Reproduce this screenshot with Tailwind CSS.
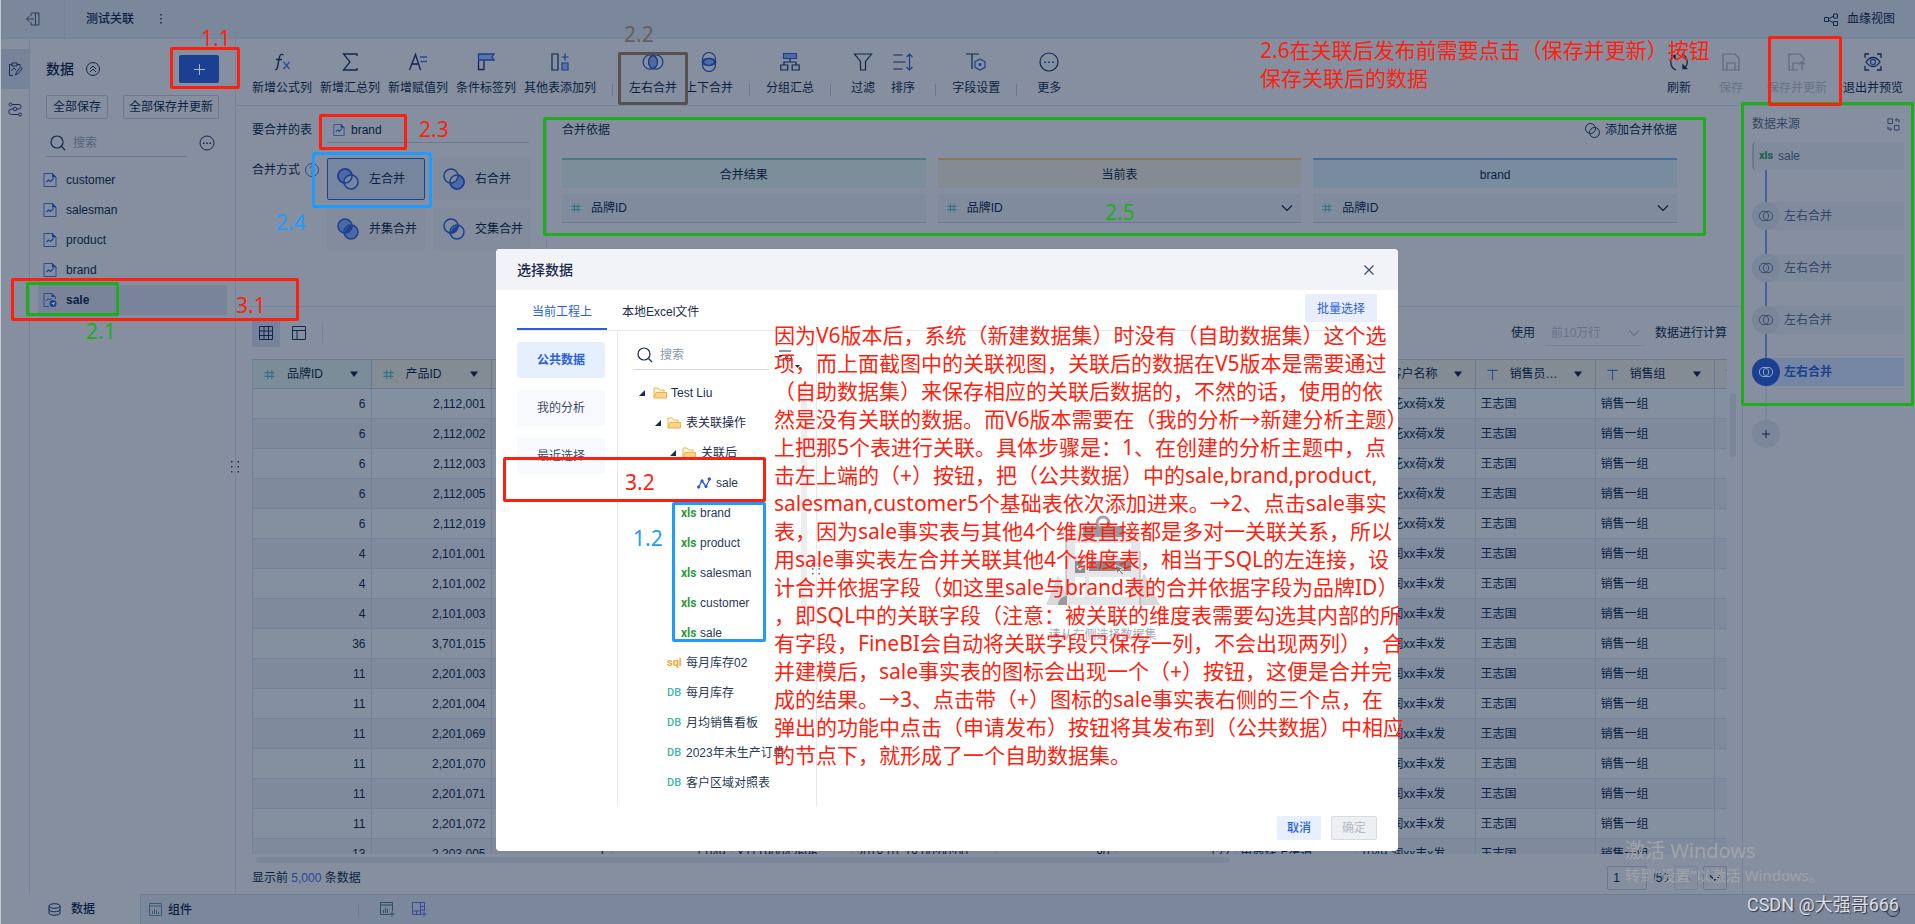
<!DOCTYPE html>
<html lang="zh-CN">
<head>
<meta charset="utf-8">
<title>测试关联</title>
<script src="https://cdn.jsdelivr.net/npm/@tailwindcss/browser@4"></script>
</head>
<body class="relative h-screen overflow-hidden bg-[#858f9f] font-['Liberation_Sans','Noto_Sans_CJK_SC',sans-serif] text-xs text-[#0b1f42]">

<svg class="hidden" aria-hidden="true">
  <symbol id="i-file" viewBox="0 0 14 14"><path d="M1 .5h8.500L13 4v9.500H1z" fill="none" stroke="#2c4a92"/><path d="M9 0l4.500 4.500H9z" fill="#1d3f8f"/><path d="M3.500 9l2-2 2 1.500 3-3" fill="none" stroke="#1d3f8f" stroke-width="1.200"/></symbol>
  <symbol id="i-file-pub" viewBox="0 0 14 14"><path d="M6 13.500H1V.5h8L12.500 4v2" fill="none" stroke="#2c4a92"/><path d="M8.500 0l4 4h-4z" fill="#1d3f8f"/><path d="M3 8l2-2.500L6.500 7l2-2" fill="none" stroke="#1d3f8f"/><circle cx="10" cy="10.500" r="3.500" fill="#1d3f8f"/><path d="M8 10.500l4-1.500-1.500 3.500-.7-1.500z" fill="#a5b3d0"/></symbol>
  <symbol id="i-search" viewBox="0 0 16 16"><circle cx="7" cy="7" r="6" fill="none" stroke="currentColor" stroke-width="1.200"/><path d="M11.500 11.500L15 15" stroke="currentColor" stroke-width="1.200"/></symbol>
  <symbol id="i-more" viewBox="0 0 16 16"><circle cx="8" cy="8" r="7" fill="none" stroke="currentColor"/><path d="M4 7.500h1.500v1.500H4zM7.300 7.500h1.500v1.500H7.300zM10.500 7.500H12v1.500h-1.500z" fill="currentColor"/></symbol>
  <symbol id="i-hash" viewBox="0 0 12 12"><path d="M4 1v10M8.500 1v10M.5 4h11M.5 8h11" stroke="#2d7384" stroke-width="1.200" fill="none"/></symbol>
  <symbol id="i-t" viewBox="0 0 12 12"><path d="M.5 1.500h11M6 1.500V12" stroke="#2c4a9c" stroke-width="1.200" fill="none"/></symbol>
  <symbol id="i-caret" viewBox="0 0 8 6"><path d="M0 .5h8L4 6z" fill="#0b1f42"/></symbol>
  <symbol id="i-chev" viewBox="0 0 12 8"><path d="M1 1.500l5 5 5-5" fill="none" stroke="currentColor" stroke-width="1.200"/></symbol>
  <symbol id="i-venn" viewBox="0 0 20 18"><circle cx="7.500" cy="9" r="6.500" fill="none" stroke="currentColor" stroke-width="1.100"/><circle cx="12.500" cy="9" r="6.500" fill="none" stroke="currentColor" stroke-width="1.100"/><path d="M10 3a6.500 6.500 0 0 1 0 12a6.500 6.500 0 0 1 0-12z" fill="#4d6ba4" stroke="currentColor" stroke-width="1.100"/></symbol>
  <symbol id="i-node" viewBox="0 0 14 12"><circle cx="5" cy="6" r="4.700" fill="none" stroke="currentColor" stroke-width=".9"/><circle cx="9" cy="6" r="4.700" fill="none" stroke="currentColor" stroke-width=".9"/></symbol>
  <symbol id="i-folder" viewBox="0 0 14 12"><path d="M1 11V1h4l1.500 2H11v2" fill="#fff6e2" stroke="#eeb04a"/><path d="M1 11l2-5.500h10.500V11z" fill="#fcd48c" stroke="#eeb04a"/></symbol>
  <symbol id="i-tri" viewBox="0 0 6 6"><path d="M6 0v6H0z" fill="#1c2b4a"/></symbol>
  <symbol id="i-dots" viewBox="0 0 8 12"><path d="M0 0h1.500v1.500H0zM6.500 0H8v1.500H6.500zM0 5h1.500v1.500H0zM6.500 5H8v1.500H6.500zM0 10h1.500v1.500H0zM6.500 10H8v1.500H6.500z" fill="currentColor"/></symbol>
</svg>

<div class="flex h-screen flex-col border-l border-[#c3c9d0]">
  <!-- title bar -->
  <header class="flex h-[39px] shrink-0 items-center border-b border-[#74829a] bg-[#7b879a]">
    <button aria-label="退出" class="flex h-full w-16 items-center justify-center border-r border-[#74829a]">
      <svg class="h-[14px] w-[14px]" viewBox="0 0 14 14" fill="none" stroke="#2b3c5e"><path d="M5 4V1h8v12H5v-3M9.500 1v12M8 7H.5M3.500 4L.5 7l3 3"/></svg>
    </button>
    <h1 class="ml-[21px] text-xs font-medium">测试关联</h1>
    <button aria-label="更多操作" class="ml-[26px]"><svg class="h-3 w-[2px]" viewBox="0 0 2 12" fill="#2b3c5e"><path d="M0 1h2v1.500H0zM0 5h2v1.500H0zM0 9h2v1.500H0z"/></svg></button>
    <button class="mr-5 ml-auto flex items-center gap-[9px]">
      <svg class="h-[13px] w-[14px]" viewBox="0 0 14 13" fill="none" stroke="#15284d"><path d="M.5 4.500h4v4h-4zM9.500 1h4v4h-4zM9.500 8.500h4v4h-4zM4.500 6L9.500 3M4.500 7l5 3"/></svg>
      血缘视图
    </button>
  </header>

  <div class="flex min-h-0 flex-1">
    <!-- icon rail -->
    <nav class="w-[29px] shrink-0 border-r border-[#76839a] pt-[10px]" aria-label="视图">
      <button aria-label="数据" class="flex h-10 w-full items-center justify-center bg-[#76839a]">
        <svg class="h-[15px] w-[15px]" viewBox="0 0 15 15" fill="none" stroke="#1b2e55"><path d="M5 13.500H1.500v-11H4M9 2.500h3v2M4 1h5v3H4zM3.500 9l2.500-3 2 2M7.500 13l1-3 4-5 1.800 1.500-4 5z"/></svg>
      </button>
      <button aria-label="血缘" class="flex h-10 w-full items-center justify-center">
        <svg class="h-[15px] w-[15px]" viewBox="0 0 15 15" fill="none" stroke="#1b2e55"><circle cx="2.500" cy="2.500" r="1.500"/><circle cx="7" cy="7" r="1.800"/><circle cx="12" cy="12.500" r="1.500"/><path d="M4 2.500h7a2 2 0 0 1 2 2.200 2.200 2.200 0 0 1-2 2.300H9M5 7H3.500A2.500 2.500 0 0 0 3.500 12.500h7"/></svg>
      </button>
    </nav>

    <!-- data list -->
    <aside class="flex w-[206px] shrink-0 flex-col border-r border-[#76839a]">
      <div class="mt-4 flex h-7 items-center pr-4 pl-4">
        <h2 class="text-sm font-medium">数据</h2>
        <button aria-label="收起" class="ml-3"><svg class="h-[14px] w-[14px]" viewBox="0 0 14 14" fill="none" stroke="#15284d"><circle cx="7" cy="7" r="6.500"/><path d="M4 7l3-3 3 3M4 10l3-3 3 3"/></svg></button>
        <button aria-label="添加" class="ml-auto flex h-7 w-10 items-center justify-center rounded-xs bg-[#1c4091]"><svg class="h-[11px] w-[11px]" viewBox="0 0 11 11" stroke="#a9b5cd"><path d="M5.500 0v11M0 5.500h11"/></svg></button>
      </div>
      <div class="mt-3 flex justify-between px-4">
        <button class="h-6 rounded-xs border border-[#6c7990] px-[6px] leading-[22px]">全部保存</button>
        <button class="h-6 rounded-xs border border-[#6c7990] px-[5px] leading-[22px]">全部保存并更新</button>
      </div>
      <div class="mt-[10px] flex items-center pl-4">
        <label class="flex h-7 w-[141px] items-center gap-[7px] border-b border-[#6c7990] pl-1 text-[#15284d]">
          <svg class="h-4 w-4 shrink-0"><use href="#i-search"/></svg>
          <input type="text" placeholder="搜索" aria-label="搜索" class="w-full min-w-0 bg-transparent outline-none placeholder:text-[#56647d]">
        </label>
        <button aria-label="更多" class="ml-3"><svg class="h-4 w-4 text-[#15284d]"><use href="#i-more"/></svg></button>
      </div>
      <ul class="mt-2 pr-2 pl-2 text-[#0b1f42]">
        <li class="flex h-[30px] items-center gap-[9px] pl-[5px]"><svg class="h-[14px] w-[14px]"><use href="#i-file"/></svg>customer</li>
        <li class="flex h-[30px] items-center gap-[9px] pl-[5px]"><svg class="h-[14px] w-[14px]"><use href="#i-file"/></svg>salesman</li>
        <li class="flex h-[30px] items-center gap-[9px] pl-[5px]"><svg class="h-[14px] w-[14px]"><use href="#i-file"/></svg>product</li>
        <li class="flex h-[30px] items-center gap-[9px] pl-[5px]"><svg class="h-[14px] w-[14px]"><use href="#i-file"/></svg>brand</li>
        <li class="flex h-[30px] items-center gap-[9px] bg-[#798399] pl-[5px] font-bold"><svg class="h-[14px] w-[14px]"><use href="#i-file-pub"/></svg>sale</li>
      </ul>
    </aside>

    <div class="flex min-w-0 flex-1 flex-col">
      <!-- toolbar -->
      <div class="flex h-[67px] shrink-0 items-start gap-2 border-b border-[#76839a] pt-[13px] pr-3 pl-4 whitespace-nowrap">
        <button class="flex flex-col items-center gap-2"><svg class="h-5 w-5" viewBox="0 0 20 20" fill="none" stroke="#12264c" stroke-width="1.300"><path d="M11.500 3c-2-1.500-3.500-.5-4 2L5.500 15c-.4 2-1 3-2.500 2.500M4 7.500h6"/><path d="M11.500 10l6 7M17.500 10l-6 7" stroke="#2a4b9a"/></svg>新增公式列</button>
        <button class="flex flex-col items-center gap-2"><svg class="h-5 w-5" viewBox="0 0 20 20" fill="none" stroke="#12264c" stroke-width="1.300"><path d="M17 4V2H3.500l6.500 8-6.500 8H17v-2"/></svg>新增汇总列</button>
        <button class="flex flex-col items-center gap-2"><svg class="h-5 w-5" viewBox="0 0 20 20" fill="none" stroke="#12264c" stroke-width="1.300"><path d="M1.500 18l6-15.500 5 15.500M4 12h7"/><path d="M12 5h7M12.500 9.500H19" stroke="#2a4b9a"/></svg>新增赋值列</button>
        <button class="flex flex-col items-center gap-2"><svg class="h-5 w-5" viewBox="0 0 20 20" fill="none" stroke="#12264c" stroke-width="1.300"><path d="M2.500 8.500v9H8v-9"/><path d="M2.500 2H18l-2 3 2 3H2.500z" fill="#5874ab" stroke="#1d3f8f"/></svg>条件标签列</button>
        <button class="flex flex-col items-center gap-2"><svg class="h-5 w-5" viewBox="0 0 20 20" fill="none" stroke="#12264c" stroke-width="1.200"><path d="M2 2h6v16H2z"/><path d="M12 11h6v7h-6z" fill="#5874ab" stroke="#1d3f8f"/><path d="M15 1.500v7M11.500 5h7" stroke="#1d3f8f"/></svg>其他表添加列</button>
        <span class="mx-2 mt-8 h-3 w-px bg-[#6c7990]"></span>
        <button class="flex flex-col items-center gap-2"><svg class="h-5 w-[22px] text-[#1a3a80]"><use href="#i-venn"/></svg>左右合并</button>
        <button class="flex flex-col items-center gap-2"><svg class="h-5 w-5" viewBox="0 0 20 20" fill="none" stroke="#1a3a80" stroke-width="1.200"><path d="M3 10a7.500 5.500 0 0 1 14 0a7.500 5.500 0 0 1-14 0z" fill="#4d6ba4"/><circle cx="10" cy="7" r="6.500"/><circle cx="10" cy="13" r="6.500"/></svg>上下合并</button>
        <span class="mx-2 mt-8 h-3 w-px bg-[#6c7990]"></span>
        <button class="flex flex-col items-center gap-2"><svg class="h-5 w-5" viewBox="0 0 20 20" fill="none" stroke="#12264c" stroke-width="1.200"><path d="M10 7v3M4 13v-3h12v3M.8 13h7v5h-7zM12.200 13h7v5h-7z"/><path d="M3.500 1.500h13v5h-13z" fill="#4d6ba4" stroke="#1d3f8f"/></svg>分组汇总</button>
        <span class="mx-2 mt-8 h-3 w-px bg-[#6c7990]"></span>
        <button class="flex w-8 flex-col items-center gap-2"><svg class="h-5 w-5" viewBox="0 0 20 20" fill="none" stroke="#12264c" stroke-width="1.200"><path d="M1.500 2h17l-6 7.500V18h-5V9.500z"/></svg>过滤</button>
        <button class="flex w-8 flex-col items-center gap-2"><svg class="h-5 w-5" viewBox="0 0 20 20" fill="none" stroke="#12264c" stroke-width="1.200"><path d="M.5 3h9M.5 10h12M.5 17h9"/><path d="M16.500 2v16M13.500 5l3-3 3 3M13.500 15l3 3 3-3" stroke="#1d3f8f"/></svg>排序</button>
        <span class="mx-2 mt-8 h-3 w-px bg-[#6c7990]"></span>
        <button class="flex flex-col items-center gap-2"><svg class="h-5 w-5" viewBox="0 0 20 20" fill="none" stroke="#12264c" stroke-width="1.200"><path d="M0 2h13M6 2v15"/><path d="M14 7l5 2.700v5.600L14 18l-5-2.700V9.700z" stroke="#1d3f8f"/><circle cx="14" cy="12.500" r="1" fill="#1d3f8f" stroke="#1d3f8f"/></svg>字段设置</button>
        <span class="mx-2 mt-8 h-3 w-px bg-[#6c7990]"></span>
        <button class="flex w-8 flex-col items-center gap-2"><svg class="h-5 w-5" viewBox="0 0 20 20" fill="none" stroke="#12264c" stroke-width="1.200"><circle cx="10" cy="10" r="9"/><path d="M5 9.500h2v1.500H5zM9 9.500h2v1.500H9zM13 9.500h2v1.500h-2z" fill="#1d3f8f" stroke="none"/></svg>更多</button>
        <div class="ml-auto flex gap-4">
          <button class="flex w-8 flex-col items-center gap-2"><svg class="h-5 w-5" viewBox="0 0 20 20" fill="none" stroke="#12264c" stroke-width="1.300"><path d="M7 18A8.500 8.500 0 0 1 5 3.500M13 2a8.500 8.500 0 0 1 2 14.500"/><path d="M2.500 3.500H6v3.500M17.500 16.500H14V13z" fill="#12264c"/></svg>刷新</button>
          <button disabled class="flex w-10 flex-col items-center gap-2 text-[#66738a]"><svg class="h-5 w-5" viewBox="0 0 20 20" fill="none" stroke="#5b6a83" stroke-width="1.200"><path d="M2 2h12l4 4v12H2zM6 18v-7h8v7"/></svg>保存</button>
          <button disabled class="flex flex-col items-center gap-2 text-[#66738a]"><svg class="h-5 w-5" viewBox="0 0 20 20" fill="none" stroke="#5b6a83" stroke-width="1.200"><path d="M11 18H2V2h11l4 4v3M6 18v-7h6M15 18v-8M12 12.500l3-3 3 3"/></svg>保存并更新</button>
          <button class="flex flex-col items-center gap-2"><svg class="h-5 w-5" viewBox="0 0 20 20" fill="none" stroke="#12264c" stroke-width="1.300"><path d="M2 6V2h4M14 2h4v4M18 14v4h-4M6 18H2v-4"/><path d="M3 10c4-6 10-6 14 0-4 6-10 6-14 0z"/><circle cx="10" cy="10" r="2.500" stroke="#1d3f8f"/></svg>退出并预览</button>
        </div>
      </div>

      <div class="flex min-h-0 flex-1">
        <main class="flex min-w-0 flex-1 flex-col">
          <!-- merge settings -->
          <section class="flex h-[201px] shrink-0 border-b border-[#76839a] pt-3">
            <div class="grid w-[311px] shrink-0 grid-cols-[75px_202px] content-start gap-y-[15px] border-r border-[#76839a] pl-4">
              <span class="leading-6">要合并的表</span>
              <div class="flex h-[25px] items-center gap-[6px] border-b border-[#6c7990] pl-[6px]"><svg class="h-3 w-3"><use href="#i-file"/></svg>brand</div>
              <span class="flex h-6 items-center gap-[5px] leading-6">合并方式<svg class="h-[14px] w-[14px] shrink-0" viewBox="0 0 14 14" fill="none" stroke="#2c4a92"><circle cx="7" cy="7" r="6.500"/><path d="M5 5.500c0-3 4-3 4-.5 0 1.500-2 1.500-2 3.500M7 9.500v1.500"/></svg></span>
              <div class="grid grid-cols-[98px_98px] gap-2">
                <button class="flex h-[42px] items-center gap-[10px] rounded-xs border border-[#1c4091] bg-[#76869f] pl-[9px]"><svg class="h-[22px] w-[22px]" viewBox="0 0 22 22" stroke="#1c4091" stroke-width="1.500"><circle cx="8" cy="8" r="7" fill="#4b69a5"/><circle cx="14" cy="14" r="7" fill="#76869f"/><circle cx="8" cy="8" r="7" fill="none"/></svg>左合并</button>
                <button class="flex h-[42px] items-center gap-[10px] rounded-xs bg-[#828c9d] pl-[10px]"><svg class="h-[22px] w-[22px]" viewBox="0 0 22 22" stroke="#1c4091" stroke-width="1.500"><circle cx="14" cy="14" r="7" fill="#4b69a5"/><circle cx="8" cy="8" r="7" fill="#828c9d"/><circle cx="14" cy="14" r="7" fill="none"/></svg>右合并</button>
                <button class="flex h-[42px] items-center gap-[10px] rounded-xs bg-[#828c9d] pl-[10px]"><svg class="h-[22px] w-[22px]" viewBox="0 0 22 22" stroke="#1c4091" stroke-width="1.500"><circle cx="8" cy="8" r="7" fill="#4b69a5"/><circle cx="14" cy="14" r="7" fill="#4b69a5"/><path d="M15 8.500a7 7 0 0 1-6.500 6.500A7 7 0 0 1 15 8.500z" fill="#1c4091"/></svg>并集合并</button>
                <button class="flex h-[42px] items-center gap-[10px] rounded-xs bg-[#828c9d] pl-[10px]"><svg class="h-[22px] w-[22px]" viewBox="0 0 22 22" stroke="#1c4091" stroke-width="1.500" fill="none"><circle cx="8" cy="8" r="7"/><circle cx="14" cy="14" r="7"/><path d="M15 8.500a7 7 0 0 1-6.500 6.500A7 7 0 0 1 15 8.500z" fill="#1c4091"/></svg>交集合并</button>
              </div>
            </div>
            <div class="min-w-0 flex-1 pr-[65px] pl-[15px]">
              <div class="flex h-6 items-center justify-between">
                <h2>合并依据</h2>
                <button class="flex items-center gap-[5px]"><svg class="h-[15px] w-[15px]" viewBox="0 0 15 15" fill="none" stroke="#12264c"><circle cx="5.500" cy="5.500" r="5"/><circle cx="9.500" cy="9.500" r="5"/></svg>添加合并依据</button>
              </div>
              <div class="mt-4 grid grid-cols-3 gap-3">
                <div>
                  <h3 class="flex h-[30px] items-center justify-center border-t-2 border-[#4c7a80] bg-[#7c8e99] pt-px">合并结果</h3>
                  <div class="mt-[6px] flex h-[29px] items-center gap-[10px] border-b border-[#6c7990] bg-[#808b9d] pl-[9px]"><svg class="h-[10px] w-[10px]"><use href="#i-hash"/></svg>品牌ID</div>
                </div>
                <div>
                  <h3 class="flex h-[30px] items-center justify-center border-t-2 border-[#86795f] bg-[#848b92] pt-px">当前表</h3>
                  <label class="relative mt-[6px] flex h-[29px] items-center gap-[10px] border-b border-[#6c7990] bg-[#808b9d] pl-[9px]"><svg class="h-[10px] w-[10px] shrink-0"><use href="#i-hash"/></svg><select aria-label="当前表字段" class="flex-1 appearance-none bg-transparent outline-none"><option>品牌ID</option></select><svg class="pointer-events-none absolute right-2 h-2 w-3"><use href="#i-chev"/></svg></label>
                </div>
                <div>
                  <h3 class="flex h-[30px] items-center justify-center border-t-2 border-[#446d9c] bg-[#798b9e] pt-px">brand</h3>
                  <label class="relative mt-[6px] flex h-[29px] items-center gap-[10px] border-b border-[#6c7990] bg-[#808b9d] pl-[9px]"><svg class="h-[10px] w-[10px] shrink-0"><use href="#i-hash"/></svg><select aria-label="brand字段" class="flex-1 appearance-none bg-transparent outline-none"><option>品牌ID</option></select><svg class="pointer-events-none absolute right-2 h-2 w-3"><use href="#i-chev"/></svg></label>
                </div>
              </div>
            </div>
          </section>

          <!-- preview table -->
          <section class="flex min-h-0 flex-1 flex-col pr-[15px] pl-4">
            <div class="mt-3 flex h-7 shrink-0 items-center">
              <button aria-label="表格视图" class="flex h-7 w-7 items-center justify-center rounded-xs bg-[#76839a]"><svg class="h-[14px] w-[14px]" viewBox="0 0 14 14" fill="none" stroke="#12264c"><path d="M.5.5h13v13H.5zM5 .5v13M9.500.5v13M.5 5h13M.5 9.500h13"/></svg></button>
              <button aria-label="分栏视图" class="ml-3"><svg class="h-[14px] w-[14px]" viewBox="0 0 14 14" fill="none" stroke="#12264c"><path d="M.5.5h13v13H.5zM.5 4.500h13M5 4.500v9"/></svg></button>
              <span class="ml-4 h-5 w-px bg-[#76839a]"></span>
              <span class="ml-auto">使用</span>
              <label class="relative mx-[10px] flex h-[26px] w-[100px] items-center border-b border-[#76839a] pl-[6px] text-[#66738a]"><select disabled aria-label="计算行数" class="w-full appearance-none bg-transparent opacity-100 outline-none"><option>前10万行</option></select><svg class="pointer-events-none absolute right-[5px] h-2 w-3"><use href="#i-chev"/></svg></label>
              <span>数据进行计算</span>
            </div>
            <div class="relative mt-3 min-h-0 flex-1">
              <div class="h-[495px] overflow-hidden border-l border-[#74829a]">
                <table class="w-[1581px] table-fixed border-collapse">
                  <colgroup><col class="w-[118px]"><col class="w-[120px]"><col class="w-[120px]"><col class="w-[120px]"><col class="w-[120px]"><col class="w-[144px]"><col class="w-[120px]"><col class="w-[120px]"><col class="w-[120px]"><col class="w-[120px]"><col class="w-[120px]"><col class="w-[119px]"><col class="w-[120px]"></colgroup>
                  <thead><tr id="head" class="h-[29px]"></tr></thead>
                  <tbody id="rows"></tbody>
                </table>
              </div>
              <div class="absolute top-[34px] -right-[9px] h-16 w-[6px] rounded-full bg-[#7a869a]"></div>
              <div class="mt-[3px] ml-1 h-[6px] w-[66%] rounded-full bg-[#7a869a]"></div>
            </div>
            <div class="mb-1 flex h-6 shrink-0 items-center">
              <p>显示前 <span class="text-[#2a4399]">5,000</span> 条数据</p>
              <input aria-label="页码" value="1" class="ml-auto h-6 w-10 rounded-xs border border-[#6c7990] bg-transparent px-[5px] outline-none">
              <span class="ml-[5px]">/50</span>
              <button disabled aria-label="上一页" class="ml-[5px] flex h-6 w-6 items-center justify-center rounded-xs border border-[#78859a] text-[#6c7990]"><svg class="h-2 w-3 rotate-180"><use href="#i-chev"/></svg></button>
              <button aria-label="下一页" class="ml-[5px] flex h-6 w-6 items-center justify-center rounded-xs border border-[#6c7990]"><svg class="h-2 w-3"><use href="#i-chev"/></svg></button>
            </div>
          </section>
        </main>

        <!-- data source steps -->
        <aside class="w-[173px] shrink-0 border-l border-[#74829a] pr-[11px] pl-[9px] text-[#334564]">
          <div class="flex h-9 items-center justify-between pr-1">
            <h2>数据来源</h2>
            <svg class="h-[13px] w-[13px]" viewBox="0 0 14 14" fill="none" stroke="#2b3c5e"><path d="M1 1h5v5H1zM8 8h5v5H8zM9 2h4v3M11 0L9 2l2 2M5 12H1V9M3 14l2-2-2-2"/></svg>
          </div>
          <div class="flex h-7 items-center gap-[5px] rounded-sm border-l-2 border-[#6a7992] bg-[#808b9d] pl-[5px]"><span class="w-[14px] font-['Roboto'] text-[11px] font-bold text-[#1c5c4c]">xls</span>sale</div>
          <div class="ml-[13px] h-8 w-[2px] bg-[#48629a]"></div>
          <div class="flex h-7 items-center gap-1 rounded-l-full rounded-r-sm bg-[#808b9d]"><span class="flex h-7 w-7 items-center justify-center rounded-full bg-[#7a869a]"><svg class="h-3 w-[14px]"><use href="#i-node"/></svg></span>左右合并</div>
          <div class="ml-[13px] h-6 w-[2px] bg-[#48629a]"></div>
          <div class="flex h-7 items-center gap-1 rounded-l-full rounded-r-sm bg-[#808b9d]"><span class="flex h-7 w-7 items-center justify-center rounded-full bg-[#7a869a]"><svg class="h-3 w-[14px]"><use href="#i-node"/></svg></span>左右合并</div>
          <div class="ml-[13px] h-6 w-[2px] bg-[#48629a]"></div>
          <div class="flex h-7 items-center gap-1 rounded-l-full rounded-r-sm bg-[#808b9d]"><span class="flex h-7 w-7 items-center justify-center rounded-full bg-[#7a869a]"><svg class="h-3 w-[14px]"><use href="#i-node"/></svg></span>左右合并</div>
          <div class="ml-[13px] h-6 w-[2px] bg-[#48629a]"></div>
          <div class="flex h-7 items-center gap-1 rounded-l-full rounded-r-sm bg-[#7486a3] font-bold text-[#1c4091]"><span class="flex h-7 w-7 items-center justify-center rounded-full bg-[#1c4091] text-[#a9b5cd]"><svg class="h-3 w-[14px]"><use href="#i-node"/></svg></span>左右合并</div>
          <div class="ml-[13px] h-[34px] w-[2px] bg-[#7a869a]"></div>
          <button aria-label="添加步骤" class="flex h-7 w-7 items-center justify-center rounded-full bg-[#7a869a]"><svg class="h-2 w-2" viewBox="0 0 8 8" stroke="#12264c"><path d="M4 0v8M0 4h8"/></svg></button>
        </aside>
      </div>
    </div>
  </div>

  <!-- bottom tabs -->
  <footer class="flex h-[30px] shrink-0 items-center bg-[#7b879a] text-xs font-medium">
    <button class="flex h-full w-[140px] items-center gap-[10px] border-r border-[#6f7d93] bg-[#858f9f] pl-[47px]"><svg class="h-[13px] w-[13px]" viewBox="0 0 13 13" fill="none" stroke="#12264c"><ellipse cx="6.500" cy="3" rx="5.500" ry="2.300"/><path d="M1 3v7c0 3 11 3 11 0V3M1 6.500c0 3 11 3 11 0"/></svg>数据</button>
    <div class="flex h-full flex-1 items-center border-t border-[#6f7d93] pl-2">
      <button class="flex items-center gap-[6px]"><svg class="h-[13px] w-[13px]" viewBox="0 0 13 13" fill="none" stroke="#3a5c72"><path d="M.5.5h12v12H.5zM.5 3h12M3.500 11V8M5.500 11V6M7.500 11V7M9.500 11V9"/></svg>组件</button>
      <span class="ml-[166px] h-3 w-px bg-[#6a788f]"></span>
      <button aria-label="新建组件" class="ml-[21px]"><svg class="h-[15px] w-[15px]" viewBox="0 0 15 15" fill="none" stroke="#2a4f63"><path d="M12.500 9V.5H.5v12h9M.5 3h12M3.500 11V8M5.500 11V6M7.500 11V7M12 9.500v5M9.500 12h5"/></svg></button>
      <button aria-label="新建仪表板" class="ml-[17px]"><svg class="h-[15px] w-[15px]" viewBox="0 0 15 15" fill="none" stroke="#37499a"><path d="M12.500 9V.5H.5v12h9M8.500.5v12M.5 9h8M4.500 9v3.500M8.500 4.500h4M8.500 8h4M12 9.500v5M9.500 12h5"/></svg></button>
      <span class="mr-[15px] ml-auto h-[14px] w-[14px] rounded-full border border-[#1b2e55]"></span>
    </div>
  </footer>
</div>

<svg class="absolute top-[461px] left-[231px] h-3 w-2 text-[#1b2e55]"><use href="#i-dots"/></svg>

<!-- data picker dialog -->
<div role="dialog" aria-labelledby="dlg-title" class="absolute top-[249px] left-[496px] flex h-[602px] w-[902px] flex-col rounded-sm bg-white text-[#1c2b4a]">
  <div class="flex h-[41px] shrink-0 items-center justify-between rounded-t-sm bg-[#f2f3f7] pr-6 pl-[21px]">
    <h2 id="dlg-title" class="text-sm font-medium">选择数据</h2>
    <button aria-label="关闭"><svg class="h-[10px] w-[10px]" viewBox="0 0 10 10" stroke="#3b4a68" stroke-width="1.200"><path d="M.5.5l9 9M9.500.5l-9 9"/></svg></button>
  </div>
  <div class="mx-[21px] flex h-[41px] shrink-0 items-center border-b border-[#e6e8f0]">
    <button class="h-10 w-[90px] border-b-2 border-[#2c5fe0] pt-[6px] text-[#2c5fe0]">当前工程上</button>
    <button class="ml-[15px] h-10 pt-1">本地Excel文件</button>
    <button class="mb-1 ml-auto h-7 w-[72px] rounded-xs bg-[#e8eefd] pt-px text-[#2c5fe0]">批量选择</button>
  </div>
  <div class="ml-[21px] flex h-[475px] shrink-0">
    <div class="flex w-[101px] shrink-0 flex-col gap-3 border-r border-[#e6e8f0] pt-[11px] pr-3">
      <button class="h-9 rounded-sm bg-[#e6effe] font-bold text-[#2c5fe0]">公共数据</button>
      <button class="h-9 rounded-sm bg-[#f8f9fc] text-[#3b4a68]">我的分析</button>
      <button class="h-9 rounded-sm bg-[#f8f9fc] text-[#3b4a68]">最近选择</button>
    </div>
    <div class="relative w-[199px] shrink-0 border-r border-[#e6e8f0] pt-[10px]">
      <div class="flex items-start pl-[15px]">
        <label class="flex h-[29px] w-[136px] items-center gap-[7px] border-b border-[#d7dae2] pl-1"><svg class="h-4 w-4 shrink-0"><use href="#i-search"/></svg><input type="text" placeholder="搜索" aria-label="搜索数据" class="w-full min-w-0 bg-transparent outline-none placeholder:text-[#8d96a8]"></label>
        <button aria-label="排序" class="mt-[9px] ml-[9px]"><svg class="h-[18px] w-[22px]" viewBox="0 0 22 18" fill="none" stroke="#1c2b4a"><path d="M1 1h12M1 5.500h6M1 10h4"/><circle cx="10.500" cy="8" r="3"/><path d="M17 15h5l-2.500 3z" fill="#1c2b4a" stroke="none"/></svg></button>
      </div>
      <ul class="mt-2 whitespace-nowrap text-[#2a3956]">
        <li class="flex h-[30px] items-center pl-[21px] text-[#1c2b4a]"><svg class="mr-2 h-[6px] w-[6px]"><use href="#i-tri"/></svg><svg class="mr-1 h-3 w-[14px]"><use href="#i-folder"/></svg>Test Liu</li>
        <li class="flex h-[30px] items-center pl-[37px] text-[#1c2b4a]"><svg class="mr-[6px] h-[6px] w-[6px]"><use href="#i-tri"/></svg><svg class="mr-[5px] h-3 w-[14px]"><use href="#i-folder"/></svg>表关联操作</li>
        <li class="flex h-[30px] items-center pl-[52px] text-[#1c2b4a]"><svg class="mr-[6px] h-[6px] w-[6px]"><use href="#i-tri"/></svg><svg class="mr-[5px] h-3 w-[14px]"><use href="#i-folder"/></svg>关联后</li>
        <li class="flex h-[30px] items-center pl-[79px]"><svg class="mr-[5px] h-3 w-[14px]" viewBox="0 0 14 12" fill="#2c5fe0" stroke="#2c5fe0"><path d="M1.500 10L5 4l4 5.500L12.500 2.500" fill="none" stroke-width="1.300"/><circle cx="1.700" cy="10" r="1.200"/><circle cx="5" cy="4" r="1.200"/><circle cx="9" cy="9.500" r="1.200"/><circle cx="12.300" cy="2" r="1.300"/></svg>sale</li>
        <li class="flex h-[30px] items-center pl-[63px]"><span class="w-[19px] font-['Roboto'] text-xs font-bold text-[#2f9a3c]">xls</span>brand</li>
        <li class="flex h-[30px] items-center pl-[63px]"><span class="w-[19px] font-['Roboto'] text-xs font-bold text-[#2f9a3c]">xls</span>product</li>
        <li class="flex h-[30px] items-center pl-[63px]"><span class="w-[19px] font-['Roboto'] text-xs font-bold text-[#2f9a3c]">xls</span>salesman</li>
        <li class="flex h-[30px] items-center pl-[63px]"><span class="w-[19px] font-['Roboto'] text-xs font-bold text-[#2f9a3c]">xls</span>customer</li>
        <li class="flex h-[30px] items-center pl-[63px]"><span class="w-[19px] font-['Roboto'] text-xs font-bold text-[#2f9a3c]">xls</span>sale</li>
        <li class="flex h-[30px] items-center pl-[49px]"><span class="w-[19px] font-['Roboto'] text-[11px] font-bold text-[#f0a93a]">sql</span>每月库存02</li>
        <li class="flex h-[30px] items-center pl-[49px]"><span class="w-[19px] font-['Roboto'] text-[11px] font-medium text-[#3fb5a6]">DB</span>每月库存</li>
        <li class="flex h-[30px] items-center pl-[49px]"><span class="w-[19px] font-['Roboto'] text-[11px] font-medium text-[#3fb5a6]">DB</span>月均销售看板</li>
        <li class="flex h-[30px] items-center pl-[49px]"><span class="w-[19px] font-['Roboto'] text-[11px] font-medium text-[#3fb5a6]">DB</span>2023年未生产订单.</li>
        <li class="flex h-[30px] items-center pl-[49px]"><span class="w-[19px] font-['Roboto'] text-[11px] font-medium text-[#3fb5a6]">DB</span>客户区域对照表</li>
      </ul>
      <div class="absolute top-[51px] right-[9px] h-[226px] w-[6px] rounded-full bg-[#ededf0]"></div>
      <svg class="absolute top-[232px] -right-1 h-3 w-2 text-[#5a6780]"><use href="#i-dots"/></svg>
    </div>
    <div class="flex flex-1 flex-col items-center pt-[184px] pr-[10px]">
      <svg class="h-[90px] w-[114px]" viewBox="0 0 114 90">
        <path d="M0 90L12 60l12 30zM84 90L98 58l16 32z" fill="#d9d9dc"/>
        <path d="M20 16h74v74H20z" fill="#e6e6ea"/><path d="M20 20v70M94 36v54" stroke="#a8a8ac"/>
        <path d="M29 28h56v14H29zM29 62h10v20H29zM43 62h42v20H43z" fill="#fff"/>
        <path d="M29 46h10v12H29zM43 46h42v10H43z" fill="#8c8c90"/><path d="M31 51l3 3 5-6" stroke="#fff" stroke-width="2" fill="none"/>
        <circle cx="57" cy="8" r="6" fill="none" stroke="#a2a2a6" stroke-width="3"/><path d="M37 11h40v11H37z" fill="#9a9a9e"/>
        <path d="M69 50l9 4-4 1 4 4-2 1-3-4-2 3z" fill="#77777b" stroke="#fff" stroke-width=".8"/>
        <path d="M12 90a9 9 0 0 1 9-9v9z" fill="#9a9a9e"/>
      </svg>
      <p class="mt-[22px] text-[#a5abb8]">请从左侧选择数据集</p>
    </div>
  </div>
  <div class="flex justify-end gap-[10px] pt-[10px] pr-[21px]">
    <button class="h-6 w-11 rounded-xs bg-[#e8effe] font-medium text-[#2c5fe0]">取消</button>
    <button disabled class="h-6 w-[46px] rounded-xs border border-[#d8dade] bg-[#eeeff2] text-[#b5b9c4]">确定</button>
  </div>
</div>

<!-- markup boxes and notes laid over the page -->
<div class="pointer-events-none font-['Noto_Sans','Noto_Sans_CJK_SC',sans-serif] text-[21px] leading-7 whitespace-nowrap text-[#ff1f0f] [text-spacing-trim:space-all]">
  <div class="absolute top-[47px] left-[170px] h-[42px] w-[70px] rounded-xs border-3 border-[#ff1f0f]"></div>
  <span class="absolute top-[24px] left-[201px]">1.1</span>
  <div class="absolute top-[52px] left-[618px] h-[53px] w-[70px] rounded-xs border-3 border-[#56504e]"></div>
  <span class="absolute top-[20px] left-[624px] text-[#66605f]">2.2</span>
  <div class="absolute top-[114px] left-[319px] h-9 w-[88px] rounded-xs border-3 border-[#ff1f0f]"></div>
  <span class="absolute top-[115px] left-[419px]">2.3</span>
  <div class="absolute top-[152px] left-[312px] h-14 w-[120px] rounded-xs border-3 border-[#1e9bff]"></div>
  <span class="absolute top-[208px] left-[276px] text-[#1e9bff]">2.4</span>
  <div class="absolute top-[278px] left-[11px] h-[43px] w-[288px] rounded-xs border-3 border-[#ff1f0f]"></div>
  <span class="absolute top-[291px] left-[236px]">3.1</span>
  <div class="absolute top-[282px] left-[26px] h-[34px] w-[93px] rounded-xs border-3 border-[#1eae1b]"></div>
  <span class="absolute top-[317px] left-[86px] text-[#1eae1b]">2.1</span>
  <div class="absolute top-[117px] left-[543px] h-[119px] w-[1163px] rounded-xs border-3 border-[#1eae1b]"></div>
  <span class="absolute top-[198px] left-[1105px] text-[#1eae1b]">2.5</span>
  <p class="absolute top-[36px] left-[1260px]">2.6在关联后发布前需要点击（保存并更新）按钮<br>保存关联后的数据</p>
  <div class="absolute top-[102px] left-[1741px] h-[304px] w-[173px] rounded-xs border-3 border-[#1eae1b]"></div>
  <div class="absolute top-[36px] left-[1768px] h-[70px] w-[74px] rounded-xs border-3 border-[#ff1f0f]"></div>
  <div class="absolute top-[457px] left-[503px] h-[45px] w-[263px] rounded-xs border-3 border-[#ff1f0f]"></div>
  <span class="absolute top-[468px] left-[625px]">3.2</span>
  <div class="absolute top-[502px] left-[672px] h-[140px] w-[94px] rounded-xs border-3 border-[#1e9bff]"></div>
  <span class="absolute top-[524px] left-[633px] text-[#1e9bff]">1.2</span>
  <p class="absolute top-[321px] left-[774px]">因为V6版本后，系统（新建数据集）时没有（自助数据集）这个选<br>项，而上面截图中的关联视图，关联后的数据在V5版本是需要通过<br>（自助数据集）来保存相应的关联后数据的，不然的话，使用的依<br>然是没有关联的数据。而V6版本需要在（我的分析→新建分析主题）<br>上把那5个表进行关联。具体步骤是：1、在创建的分析主题中，点<br>击左上端的（+）按钮，把（公共数据）中的sale,brand,product,<br>salesman,customer5个基础表依次添加进来。→2、点击sale事实<br>表，因为sale事实表与其他4个维度直接都是多对一关联关系，所以<br>用sale事实表左合并关联其他4个维度表，相当于SQL的左连接，设<br>计合并依据字段（如这里sale与brand表的合并依据字段为品牌ID）<br>，即SQL中的关联字段（注意：被关联的维度表需要勾选其内部的所<br>有字段，FineBI会自动将关联字段只保存一列，不会出现两列），合<br>并建模后，sale事实表的图标会出现一个（+）按钮，这便是合并完<br>成的结果。→3、点击带（+）图标的sale事实表右侧的三个点，在<br>弹出的功能中点击（申请发布）按钮将其发布到（公共数据）中相应<br>的节点下，就形成了一个自助数据集。</p>
  <div class="absolute top-[837px] left-[1625px] text-[#a0a3aa]">
    <p class="text-xl leading-7">激活 Windows</p>
    <p class="text-[15px] leading-5">转到“设置”以激活 Windows。</p>
  </div>
  <p class="absolute top-[891px] right-[16px] font-['Roboto','Noto_Sans_CJK_SC',sans-serif] text-lg leading-7 text-[#dcdfe4] [text-shadow:1px_1px_1px_#2b3444]">CSDN @大强哥666</p>
</div>

<script>
const cols = [['#','品牌ID'],['#','产品ID'],['#','数量'],['#','单价'],['T','订单号'],['T','日期'],['#','金额'],['#','成本'],['T','渠道'],['T','客户名称'],['T','销售员…'],['T','销售组'],['T','']];
document.getElementById('head').innerHTML = cols.map(([t, name], i) =>
  `<th class="border border-l-0 border-[#6c7990] p-0 font-normal ${i ? 'bg-[#838b94]' : 'bg-[#7a8d98]'}"><div class="flex items-center pr-[13px] pl-[11px]"><svg class="h-[11px] w-[11px] shrink-0"><use href="${t === '#' ? '#i-hash' : '#i-t'}"/></svg><span class="ml-[12px] flex-1 text-left whitespace-nowrap">${name}</span><svg class="h-[6px] w-2 shrink-0"><use href="#i-caret"/></svg></div></th>`).join('');
const data = [[6,'2,112,001'],[6,'2,112,002'],[6,'2,112,003'],[6,'2,112,005'],[6,'2,112,019'],[4,'2,101,001'],[4,'2,101,002'],[4,'2,101,003'],[36,'3,701,015'],[11,'2,201,003'],[11,'2,201,004'],[11,'2,201,069'],[11,'2,201,070'],[11,'2,201,071'],[11,'2,201,072'],[13,'2,203,005']];
document.getElementById('rows').innerHTML = data.map(([b, p], i) => {
  const customer = i < 5 ? '1048-花xx荷x发' : '1049-润xx丰x发';
  const cells = [b, p, 1, '1,049', 'X11T90042696', '2018-01-18 00:00:00', 80, 122, '电商线上渠道', customer, '王志国', '销售一组', ''];
  return `<tr class="h-[30px] ${i % 2 ? 'bg-[#7f8a9c]' : 'bg-[#848f9f]'}">` + cells.map((c, j) =>
    `<td class="border-r border-b border-[#74829a] px-[5px] py-0 whitespace-nowrap ${[0,1,2,3,6,7].includes(j) ? 'text-right' : 'text-left'}">${c}</td>`).join('') + '</tr>';
}).join('');
</script>
</body>
</html>
